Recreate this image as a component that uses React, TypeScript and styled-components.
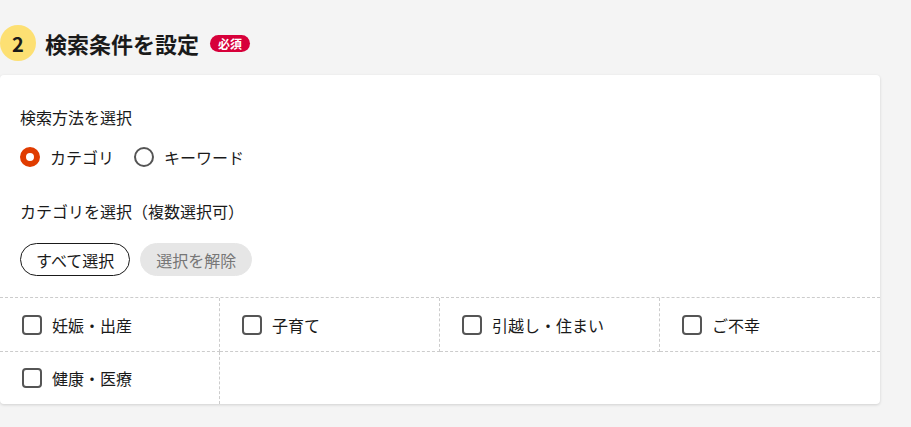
import styled, { createGlobalStyle } from 'styled-components';

const GlobalStyle = createGlobalStyle`
  body {
    margin: 0;
    background: #f4f4f4;
    font-family: "Noto Sans CJK JP", "Noto Sans", sans-serif;
    color: #1a1a1a;
  }
`;

const Page = styled.div`
  padding: 25px 31px 20px 0;
`;

const Header = styled.div`
  display: flex;
  align-items: center;
  gap: 9px;
  height: 36px;
`;

const StepNum = styled.span`
  width: 36px;
  height: 36px;
  border-radius: 50%;
  background: #fde073;
  display: flex;
  align-items: center;
  justify-content: center;
  font-size: 20px;
  font-weight: 700;
`;

const Title = styled.h2`
  margin: 0;
  font-size: 22px;
  font-weight: 700;
  line-height: 1;
`;

const Badge = styled.span`
  margin-left: 2px;
  background: #d7003a;
  color: #fff;
  font-size: 12px;
  font-weight: 700;
  line-height: 17px;
  padding: 0 8px;
  border-radius: 9px;
`;

const Card = styled.section`
  margin-top: 14px;
  background: #fff;
  border-radius: 4px;
  box-shadow: 0 1px 3px rgba(0, 0, 0, 0.15);
  overflow: hidden;
`;

const Inner = styled.div`
  padding: 30px 20px 21px;
`;

const Label = styled.p<{ $gap?: number }>`
  margin: ${(p) => p.$gap ?? 0}px 0 0;
  font-size: 16px;
  line-height: 24px;
`;

const RadioRow = styled.div`
  margin-top: 16px;
  display: flex;
  gap: 20px;
`;

const RadioItem = styled.label`
  display: flex;
  align-items: center;
  gap: 10px;
  font-size: 16px;
  line-height: 24px;
`;

const RadioMark = styled.span<{ $on?: boolean }>`
  width: 20px;
  height: 20px;
  box-sizing: border-box;
  border-radius: 50%;
  border: ${(p) => (p.$on ? '6px solid #e03c00' : '2px solid #555')};
  background: #fff;
`;

const ButtonRow = styled.div`
  margin-top: 20px;
  display: flex;
  gap: 10px;
`;

const PillButton = styled.button<{ $muted?: boolean }>`
  height: 33px;
  padding: 0 15px;
  border-radius: 17px;
  font-family: inherit;
  font-size: 16px;
  border: ${(p) => (p.$muted ? '1px solid #e6e6e6' : '1px solid #1a1a1a')};
  background: ${(p) => (p.$muted ? '#e6e6e6' : '#fff')};
  color: ${(p) => (p.$muted ? '#777' : '#1a1a1a')};
`;

const Grid = styled.div`
  display: grid;
  grid-template-columns: repeat(4, 1fr);
  border-top: 1px dashed #ccc;
`;

const Cell = styled.label`
  height: 52px;
  border-right: 1px dashed #ccc;
  padding-left: 22px;
  display: flex;
  align-items: center;
  gap: 10px;
  font-size: 16px;

  &:nth-child(-n + 4) {
    height: 53px;
    border-bottom: 1px dashed #ccc;
  }

  &:nth-child(4n) {
    border-right: none;
  }
`;

const Box = styled.span`
  width: 20px;
  height: 20px;
  box-sizing: border-box;
  border: 2px solid #555;
  border-radius: 4px;
`;

const categories = ['妊娠・出産', '子育て', '引越し・住まい', 'ご不幸', '健康・医療'];

export default function App() {
  return (
    <>
      <GlobalStyle />
      <Page>
        <Header>
          <StepNum>2</StepNum>
          <Title>検索条件を設定</Title>
          <Badge>必須</Badge>
        </Header>
        <Card>
          <Inner>
            <Label>検索方法を選択</Label>
            <RadioRow>
              <RadioItem>
                <RadioMark $on />
                カテゴリ
              </RadioItem>
              <RadioItem>
                <RadioMark />
                キーワード
              </RadioItem>
            </RadioRow>
            <Label $gap={30}>カテゴリを選択（複数選択可）</Label>
            <ButtonRow>
              <PillButton>すべて選択</PillButton>
              <PillButton $muted>選択を解除</PillButton>
            </ButtonRow>
          </Inner>
          <Grid>
            {categories.map((c) => (
              <Cell key={c}>
                <Box />
                {c}
              </Cell>
            ))}
          </Grid>
        </Card>
      </Page>
    </>
  );
}
